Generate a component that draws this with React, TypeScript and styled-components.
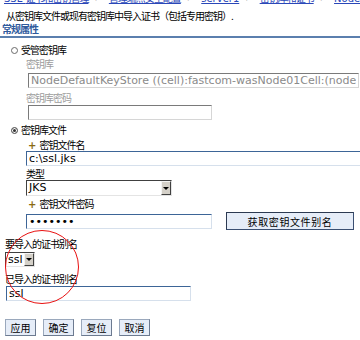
import * as React from 'react';
import styled, { createGlobalStyle } from 'styled-components';

const cjk = `"Noto Sans CJK SC", "DejaVu Sans", sans-serif`;
const latin = `"DejaVu Sans", "Noto Sans CJK SC", sans-serif`;

const GlobalStyle = createGlobalStyle`
  html, body {
    margin: 0;
    padding: 0;
    background: #fff;
  }
  body {
    width: 360px;
    height: 340px;
    overflow: hidden;
  }
`;

const Page = styled.div`
  position: relative;
  width: 360px;
  height: 340px;
  overflow: hidden;
  display: flex;
  flex-direction: column;
  font-family: ${cjk};
  font-size: 10px;
  letter-spacing: -1px;
  color: #000;
`;

const Breadcrumb = styled.div`
  display: flex;
  align-items: center;
  margin-top: -8px;
  height: 12px;
  line-height: 12px;
  padding-left: 4px;
  white-space: nowrap;
`;

const Crumb = styled.a`
  color: #2a47b8;
  text-decoration: underline;
  cursor: pointer;
`;

const Latin = styled.span`
  font-family: ${latin};
  letter-spacing: 0;
`;

const Sep = styled.span`
  font-family: ${latin};
  letter-spacing: 0;
  color: #555;
  margin: 0 6px;
`;

const Description = styled.div`
  margin-top: 6px;
  height: 12px;
  line-height: 12px;
  padding-left: 6px;
  white-space: nowrap;
`;

const SectionTitle = styled.div`
  margin-top: 1px;
  height: 12px;
  line-height: 12px;
  padding: 0 0 1px 2px;
  border-bottom: 2px solid #5b7fae;
  color: #2f5a9c;
  font-weight: bold;
`;

const RadioRow = styled.label<{ $gap: number }>`
  display: flex;
  align-items: center;
  margin-top: ${(p) => p.$gap}px;
  height: 12px;
  line-height: 12px;
  padding-left: 11px;
`;

const Radio = styled.span<{ $checked?: boolean }>`
  box-sizing: border-box;
  width: 7px;
  height: 7px;
  margin-right: 3px;
  border-radius: 50%;
  border: 1px solid #6a6a6a;
  background: ${(p) => (p.$checked ? '#333' : '#fff')};
  box-shadow: ${(p) => (p.$checked ? 'inset 0 0 0 1px #fff' : 'none')};
`;

const Sub = styled.div`
  display: flex;
  flex-direction: column;
  padding-left: 26px;
`;

const Alias = styled.div`
  display: flex;
  flex-direction: column;
  padding-left: 5px;
`;

const Label = styled.div<{ $gap: number; $muted?: boolean; $indent?: number }>`
  margin-top: ${(p) => p.$gap}px;
  padding-left: ${(p) => p.$indent || 0}px;
  height: 12px;
  line-height: 12px;
  color: ${(p) => (p.$muted ? '#9c9c9c' : '#000')};
  white-space: nowrap;
`;

const Req = styled.span`
  font-family: ${latin};
  letter-spacing: 0;
  font-weight: bold;
  color: #8a6a12;
  margin-right: 3px;
`;

const Field = styled.input<{ $gap: number; $w: number; $shift?: number; $tone: 'blue' | 'gray' }>`
  box-sizing: border-box;
  display: block;
  margin: ${(p) => p.$gap}px 0 0 ${(p) => p.$shift || 0}px;
  width: ${(p) => p.$w}px;
  height: 15px;
  padding: 0 2px;
  font-family: ${latin};
  font-size: 11px;
  letter-spacing: 0;
  line-height: 13px;
  background: #fff;
  outline: none;
  border: 1px solid;
  border-color: ${(p) =>
    p.$tone === 'blue'
      ? '#3d6597 #d6e0ec #d6e0ec #3d6597'
      : '#7a7a7a #d6d6d6 #d6d6d6 #7a7a7a'};
  color: ${(p) => (p.$tone === 'blue' ? '#000' : '#8a8a8a')};
  -webkit-text-fill-color: ${(p) => (p.$tone === 'blue' ? '#000' : '#8a8a8a')};
  opacity: 1;
`;

const Select = styled.div<{ $gap: number; $w: number; $h: number }>`
  box-sizing: border-box;
  display: flex;
  margin-top: ${(p) => p.$gap}px;
  width: ${(p) => p.$w}px;
  height: ${(p) => p.$h}px;
  border: 1px solid;
  border-color: #404040 #e4e4e4 #e4e4e4 #404040;
  background: #fff;
`;

const SelectText = styled.div`
  flex: 1;
  padding-left: 2px;
  font-family: ${latin};
  font-size: 11px;
  letter-spacing: 0;
  line-height: 13px;
  overflow: hidden;
`;

const SelectArrow = styled.div`
  box-sizing: border-box;
  width: 10px;
  display: flex;
  align-items: center;
  justify-content: center;
  background: #d4d0c8;
  border: 1px solid;
  border-color: #f4f4f4 #404040 #404040 #f4f4f4;
  &::after {
    content: '';
    border-left: 3px solid transparent;
    border-right: 3px solid transparent;
    border-top: 3px solid #000;
  }
`;

const PasswordRow = styled.div`
  display: flex;
  align-items: center;
  gap: 14px;
  margin-top: 2px;
  height: 18px;
`;

const AliasButton = styled.button`
  box-sizing: border-box;
  width: 128px;
  height: 18px;
  padding: 0;
  font-family: ${cjk};
  font-size: 10px;
  letter-spacing: 0.6px;
  color: #000;
  background: #e6edf8;
  border: 1px solid;
  border-color: #2c3a52 #3a4f72 #3a4f72 #2c3a52;
`;

const ButtonBar = styled.div`
  display: flex;
  gap: 7px;
  margin-top: 18px;
  padding-left: 5px;
`;

const FormButton = styled.button`
  box-sizing: border-box;
  width: 31px;
  height: 17px;
  padding: 0;
  font-family: ${cjk};
  font-size: 10px;
  letter-spacing: 0;
  color: #000;
  background: #e6edf8;
  border: 1px solid;
  border-color: #9aa8bc #6c7a90 #6c7a90 #9aa8bc;
`;

const Marker = styled.div`
  position: absolute;
  left: 5px;
  top: 230px;
  width: 74px;
  height: 74px;
  box-sizing: border-box;
  border: 1px solid #e81010;
  border-radius: 50%;
  pointer-events: none;
`;

const crumbs = ['SSL 证书和密钥管理', '管理端点安全配置', 'server1', '密钥库和证书', 'NodeDefaultKeyStore'];

export default function App() {
  const [source, setSource] = React.useState('file');

  return (
    <Page>
      <GlobalStyle />
      <Breadcrumb>
        {crumbs.map((c, i) => (
          <React.Fragment key={c}>
            {i > 0 && <Sep>&gt;</Sep>}
            <Crumb>
              {c.startsWith('SSL') ? (
                <>
                  <Latin>SSL </Latin>证书和密钥管理
                </>
              ) : /^[A-Za-z]/.test(c) ? (
                <Latin>{c}</Latin>
              ) : (
                c
              )}
            </Crumb>
          </React.Fragment>
        ))}
      </Breadcrumb>
      <Description>从密钥库文件或现有密钥库中导入证书（包括专用密钥）.</Description>
      <SectionTitle>常规属性</SectionTitle>

      <RadioRow $gap={6} onClick={() => setSource('managed')}>
        <Radio $checked={source === 'managed'} />
        受管密钥库
      </RadioRow>
      <Sub>
        <Label $gap={2} $muted>
          密钥库
        </Label>
        <Field
          $gap={3}
          $w={331}
          $shift={2}
          $tone="gray"
          disabled
          value="NodeDefaultKeyStore ((cell):fastcom-wasNode01Cell:(node):fastcom-wasNode01)"
          readOnly
        />
        <Label $gap={4} $muted>
          密钥库密码
        </Label>
        <Field $gap={1} $w={184} $shift={2} $tone="gray" disabled value="" readOnly />
      </Sub>

      <RadioRow $gap={4} onClick={() => setSource('file')}>
        <Radio $checked={source === 'file'} />
        密钥库文件
      </RadioRow>
      <Sub>
        <Label $gap={3} $indent={2}>
          <Req>+</Req>密钥文件名
        </Label>
        <Field $gap={0} $w={345} $tone="blue" defaultValue="c:\ssl.jks" />
        <Label $gap={2}>类型</Label>
        <Select $gap={0} $w={146} $h={16}>
          <SelectText>JKS</SelectText>
          <SelectArrow />
        </Select>
        <Label $gap={2} $indent={2}>
          <Req>+</Req>密钥文件密码
        </Label>
        <PasswordRow>
          <Field $gap={0} $w={186} $tone="blue" type="password" defaultValue="1234567" />
          <AliasButton>获取密钥文件别名</AliasButton>
        </PasswordRow>
      </Sub>

      <Alias>
        <Label $gap={8}>要导入的证书别名</Label>
        <Select $gap={2} $w={30} $h={15}>
          <SelectText>ssl</SelectText>
          <SelectArrow />
        </Select>
        <Label $gap={6}>已导入的证书别名</Label>
        <Field $gap={1} $w={185} $shift={1} $tone="blue" defaultValue="ssl" />
      </Alias>

      <ButtonBar>
        <FormButton>应用</FormButton>
        <FormButton>确定</FormButton>
        <FormButton>复位</FormButton>
        <FormButton>取消</FormButton>
      </ButtonBar>

      <Marker />
    </Page>
  );
}
